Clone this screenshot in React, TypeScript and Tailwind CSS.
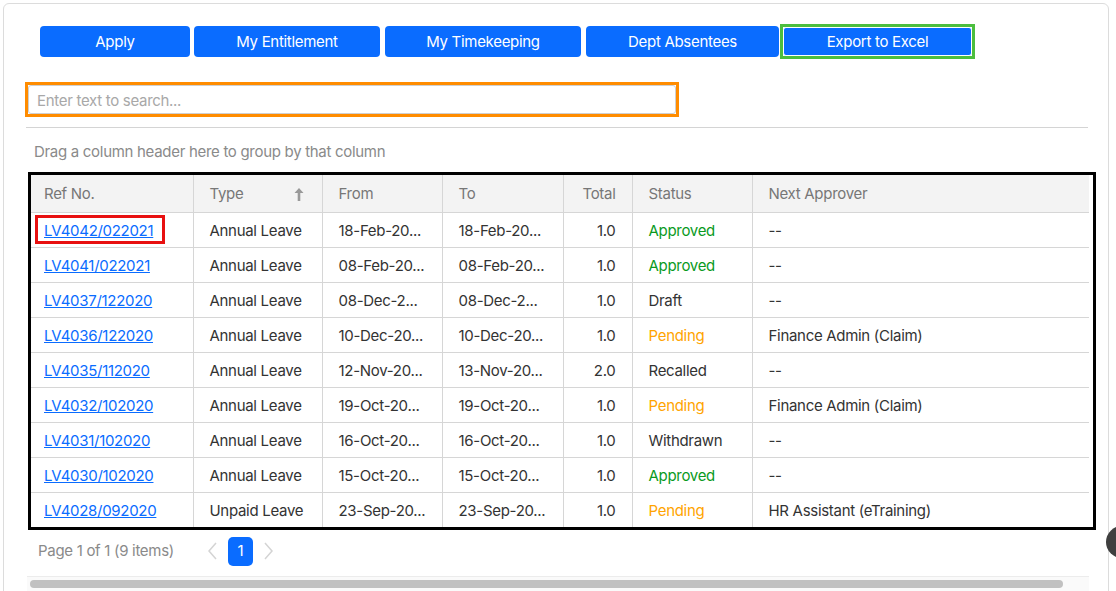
import React from "react";

type Row = {
  ref: string;
  type: string;
  from: string;
  to: string;
  total: string;
  status: string;
  approver: string;
};

const rows: Row[] = [
  { ref: "LV4042/022021", type: "Annual Leave", from: "18-Feb-20...", to: "18-Feb-20...", total: "1.0", status: "Approved", approver: "--" },
  { ref: "LV4041/022021", type: "Annual Leave", from: "08-Feb-20...", to: "08-Feb-20...", total: "1.0", status: "Approved", approver: "--" },
  { ref: "LV4037/122020", type: "Annual Leave", from: "08-Dec-2...", to: "08-Dec-2...", total: "1.0", status: "Draft", approver: "--" },
  { ref: "LV4036/122020", type: "Annual Leave", from: "10-Dec-20...", to: "10-Dec-20...", total: "1.0", status: "Pending", approver: "Finance Admin (Claim)" },
  { ref: "LV4035/112020", type: "Annual Leave", from: "12-Nov-20...", to: "13-Nov-20...", total: "2.0", status: "Recalled", approver: "--" },
  { ref: "LV4032/102020", type: "Annual Leave", from: "19-Oct-20...", to: "19-Oct-20...", total: "1.0", status: "Pending", approver: "Finance Admin (Claim)" },
  { ref: "LV4031/102020", type: "Annual Leave", from: "16-Oct-20...", to: "16-Oct-20...", total: "1.0", status: "Withdrawn", approver: "--" },
  { ref: "LV4030/102020", type: "Annual Leave", from: "15-Oct-20...", to: "15-Oct-20...", total: "1.0", status: "Approved", approver: "--" },
  { ref: "LV4028/092020", type: "Unpaid Leave", from: "23-Sep-20...", to: "23-Sep-20...", total: "1.0", status: "Pending", approver: "HR Assistant (eTraining)" },
];

// status colours
const statusClass = (s: string) => {
  if (s === "Approved") return "text-[#0a9a1e]";
  if (s === "Pending") return "text-[#ffa400]";
  return "text-[#333]";
};

function SortArrow() {
  return (
    <svg width="10" height="13" viewBox="0 0 10 13" className="text-[#999]">
      <path d="M5 0 L9.5 5 L6.3 5 L6.3 13 L3.7 13 L3.7 5 L0.5 5 Z" fill="currentColor" />
    </svg>
  );
}

function Chevron({ dir }: { dir: "left" | "right" }) {
  return (
    <svg width="9" height="18" viewBox="0 0 9 18">
      <polyline
        points={dir === "left" ? "8,1 1,9 8,17" : "1,1 8,9 1,17"}
        fill="none"
        stroke="#d4d4d4"
        strokeWidth="1.5"
      />
    </svg>
  );
}

export default function App() {

  const btn =
    "h-[31px] rounded-[4px] bg-[#0a6cff] pt-[2px] text-white text-[15px] flex items-center justify-center";

  const cell = (i: number) =>
    (i < rows.length - 1 ? "border-b " : "") + "border-[#d6d6d6] pt-[3px] ";

  return (

    <div className="relative h-[591px] w-[1116px] overflow-hidden bg-white font-['Inter','Liberation_Sans',sans-serif] tracking-[-0.3px]">

      <div className="ml-[3px] mt-[3px] h-[620px] w-[1106px] rounded-t-[6px] border border-[#dcdcdc] pl-[21px]">

        {/* BUTTONS */}
        <div className="ml-[15px] mt-[20px] flex h-[35px] items-center">

          <button className={btn + " w-[150px]"}>Apply</button>
          <button className={btn + " ml-[4px] w-[186px]"}>My Entitlement</button>
          <button className={btn + " ml-[5px] w-[196px]"}>My Timekeeping</button>
          <button className={btn + " ml-[5px] w-[193px]"}>Dept Absentees</button>

          <div className="ml-[1px] h-[35px] w-[195px] border-[3px] border-[#4cbe3f]">
            <button className="flex h-full w-full items-center justify-center rounded-[3px] border border-white bg-[#0a6cff] pt-[2px] text-[15px] text-white">
              Export to Excel
            </button>
          </div>

        </div>

        {/* SEARCH */}
        <div className="mt-[23px] h-[35px] w-[654px] border-[3px] border-[#ff8c00]">
          <input
            placeholder="Enter text to search..."
            className="h-full w-full rounded-[3px] border border-[#cfcfcf] px-[8px] pt-[1px] text-[15px] text-[#333] outline-none placeholder:text-[#a8a8a8]"
          />
        </div>

        <div className="ml-[1px] mt-[10px] h-px w-[1062px] bg-[#d4d4d4]" />

        <p className="ml-[9px] mt-[14px] h-[20px] text-[15px] leading-[20px] text-[#8a8a8a]">
          Drag a column header here to group by that column
        </p>

        {/* TABLE */}
        <div className="ml-[3px] mt-[10px] w-[1068px] border-[3px] border-black">

          <table className="w-[1058px] table-fixed border-collapse text-[15px]">

            <colgroup>
              <col className="w-[162px]" />
              <col className="w-[129px]" />
              <col className="w-[120px]" />
              <col className="w-[121px]" />
              <col className="w-[69px]" />
              <col className="w-[120px]" />
              <col className="w-[337px]" />
            </colgroup>

            <thead>
              <tr className="h-[37px] bg-[#f3f3f3] text-left text-[#777]">
                <th className="border-b border-r border-[#d6d6d6] pl-[13px] pt-[2px] font-normal">Ref No.</th>
                <th className="border-b border-r border-[#d6d6d6] px-[16px] pt-[2px] font-normal">
                  <div className="flex items-center justify-between pr-[2px]">
                    <span>Type</span>
                    <SortArrow />
                  </div>
                </th>
                <th className="border-b border-r border-[#d6d6d6] px-[16px] pt-[2px] font-normal">From</th>
                <th className="border-b border-r border-[#d6d6d6] px-[16px] pt-[2px] font-normal">To</th>
                <th className="border-b border-r border-[#d6d6d6] px-[16px] pt-[2px] text-right font-normal">Total</th>
                <th className="border-b border-r border-[#d6d6d6] px-[16px] pt-[2px] font-normal">Status</th>
                <th className="border-b border-[#d6d6d6] px-[16px] pt-[2px] font-normal">Next Approver</th>
              </tr>
            </thead>

            <tbody>
              {rows.map((r, i) => (
                <tr key={r.ref} className="h-[35px] text-[#333]">

                  <td className={cell(i) + "border-r " + (i === 0 ? "pl-[4px]" : "pl-[13px]")}>
                    {i === 0 ? (
                      <span className="-mt-[3px] inline-flex h-[29px] w-[130px] items-center border-[3px] border-[#e81010] pl-[6px] pt-[3px] align-middle">
                        <a href="#" className="text-[#0a6cff] underline">{r.ref}</a>
                      </span>
                    ) : (
                      <a href="#" className="text-[#0a6cff] underline">{r.ref}</a>
                    )}
                  </td>

                  <td className={cell(i) + "border-r px-[16px] whitespace-nowrap"}>{r.type}</td>
                  <td className={cell(i) + "border-r px-[16px] whitespace-nowrap"}>{r.from}</td>
                  <td className={cell(i) + "border-r px-[16px] whitespace-nowrap"}>{r.to}</td>
                  <td className={cell(i) + "border-r px-[16px] text-right"}>{r.total}</td>
                  <td className={cell(i) + "border-r px-[16px] " + statusClass(r.status)}>{r.status}</td>
                  <td className={cell(i) + "px-[16px] whitespace-nowrap"}>{r.approver}</td>

                </tr>
              ))}
            </tbody>

          </table>

        </div>

        {/* PAGER */}
        <div className="ml-[13px] mt-[6px] flex h-[30px] items-center">
          <span className="text-[15px] text-[#8a8a8a]">Page 1 of 1 (9 items)</span>
          <span className="ml-[34px]"><Chevron dir="left" /></span>
          <span className="ml-[11px] flex h-[29px] w-[25px] items-center justify-center rounded-[5px] bg-[#0a6cff] text-[15px] text-white">1</span>
          <span className="ml-[11px]"><Chevron dir="right" /></span>
        </div>

        {/* SCROLLBAR */}
        <div className="ml-[2px] mt-[10px] h-[15px] w-[1062px] border-t border-[#ececec] bg-[#fafafa] pt-[3px]">
          <div className="ml-[3px] h-[8px] w-[1033px] rounded-full bg-[#c1c1c1]" />
        </div>

      </div>

      <div className="absolute left-[1106px] top-[526px] h-[32px] w-[32px] rounded-full bg-[#3f3f3f]" />

    </div>

  );

}
